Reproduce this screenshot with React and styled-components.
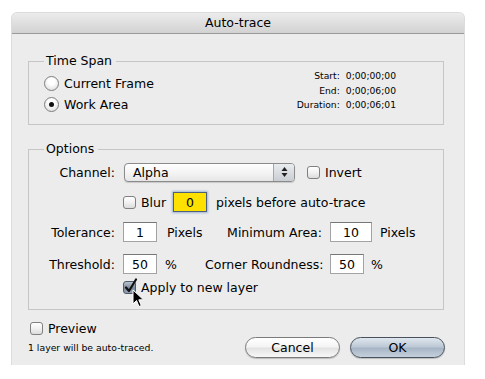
import React from 'react'
import styled, { createGlobalStyle } from 'styled-components'

const Global = createGlobalStyle`
  body {
    margin: 0;
    background: #ffffff;
    font-family: "DejaVu Sans", "Lucida Grande", sans-serif;
    color: #000;
  }
`

const Dialog = styled.div`
  position: relative;
  margin: 13px 0 0 12px;
  width: 452px;
  height: 352px;
  background: #ececec;
  border-radius: 5px 5px 0 0;
  overflow: hidden;
  box-shadow: 0 0 0 1px #dcdcdc;
`

const TitleBar = styled.div`
  height: 20px;
  line-height: 20px;
  text-align: center;
  font-size: 12.5px;
  background: linear-gradient(#ececec, #d2d2d2);
  border-bottom: 1px solid #9a9a9a;
`

const Content = styled.div`
  padding: 0 20px 0 16px;
`

const Group = styled.fieldset`
  margin: ${(p) => p.$top}px 0 0 0;
  padding: 0 0 ${(p) => p.$bottom}px 15px;
  border: 1px solid #c6c6c6;
  min-width: 0;
`

const Legend = styled.legend`
  padding: 0 4px 0 2px;
  font-size: 12.5px;
  line-height: 16px;
`

const SpanRow = styled.div`
  display: flex;
  align-items: flex-start;
`

const RadioList = styled.div`
  display: flex;
  flex-direction: column;
  padding-top: 4px;
`

const Choice = styled.div`
  display: flex;
  align-items: center;
  gap: ${(p) => p.$gap ?? 5}px;
  height: ${(p) => p.$h ?? 21}px;
  font-size: 12.5px;
  white-space: nowrap;
`

const Radio = styled.span`
  width: 13px;
  height: 13px;
  border-radius: 50%;
  border: 1px solid #7f7f7f;
  background: radial-gradient(circle at 50% 35%, #ffffff 30%, #d6d6d6 100%);
  display: flex;
  align-items: center;
  justify-content: center;
  flex: none;
  &::after {
    content: '';
    width: 5px;
    height: 5px;
    border-radius: 50%;
    background: #111;
    display: ${(p) => (p.$on ? 'block' : 'none')};
  }
`

const Timecodes = styled.div`
  margin-left: auto;
  margin-right: 47px;
  display: grid;
  grid-template-columns: auto auto;
  column-gap: 6px;
  font-size: 9.2px;
  line-height: 14.5px;
  & > span:nth-child(odd) {
    text-align: right;
  }
`

const Form = styled.div`
  display: flex;
  flex-direction: column;
  padding-top: 4px;
`

const Row = styled.div`
  display: flex;
  align-items: center;
  height: 22px;
  margin-top: ${(p) => p.$top ?? 0}px;
  font-size: 12.5px;
  white-space: nowrap;
`

const Label = styled.span`
  width: ${(p) => p.$w}px;
  text-align: right;
  margin-right: ${(p) => p.$gap ?? 8}px;
  flex: none;
`

const Unit = styled.span`
  width: ${(p) => (p.$w ? `${p.$w}px` : 'auto')};
  margin-left: ${(p) => p.$left ?? 9}px;
  flex: none;
`

const Select = styled.div`
  width: 171px;
  height: 19px;
  box-sizing: border-box;
  border: 1px solid #8b8b8b;
  border-radius: 4px;
  background: linear-gradient(#ffffff, #f2f2f2 60%, #e6e6e6);
  display: flex;
  align-items: center;
  overflow: hidden;
  box-shadow: 0 1px 1px rgba(0, 0, 0, 0.15);
`

const SelectText = styled.span`
  flex: 1;
  padding-left: 8px;
`

const SelectArrows = styled.span`
  width: 20px;
  height: 100%;
  border-left: 1px solid #a6a6a6;
  background: linear-gradient(#e9ecef, #c9ced4);
  display: flex;
  align-items: center;
  justify-content: center;
`

const Check = styled.span`
  position: relative;
  width: 13px;
  height: 13px;
  box-sizing: border-box;
  border: 1px solid ${(p) => (p.$on ? '#4f5b6a' : '#808080')};
  border-radius: 3px;
  background: ${(p) =>
    p.$on
      ? 'linear-gradient(#b8c2ce, #7d8a9a 55%, #93a0b0)'
      : 'linear-gradient(#ffffff, #f1f1f1 50%, #dcdcdc)'};
  flex: none;
  margin-right: ${(p) => p.$gap ?? 5}px;
  margin-left: ${(p) => p.$left ?? 0}px;
  & svg {
    position: absolute;
    left: 0px;
    top: -4px;
  }
`

const Field = styled.input`
  width: ${(p) => p.$w}px;
  height: 20px;
  box-sizing: border-box;
  margin: 0;
  padding: 0;
  border: 1px solid ${(p) => (p.$focus ? '#4c5f7c' : '#a3a3a3')};
  border-top-color: ${(p) => (p.$focus ? '#4c5f7c' : '#767676')};
  background: ${(p) => (p.$focus ? '#ffe100' : '#ffffff')};
  box-shadow: ${(p) => (p.$focus ? '0 0 2px 1px #9fb5d3' : 'none')};
  text-align: center;
  font-family: inherit;
  font-size: 12.5px;
  color: #000;
  outline: none;
  flex: none;
`

const Footer = styled.div`
  display: flex;
  justify-content: space-between;
  margin-top: 10px;
`

const FooterLeft = styled.div`
  display: flex;
  flex-direction: column;
`

const Note = styled.div`
  margin-top: 6px;
  font-size: 9.3px;
  line-height: 12px;
`

const Buttons = styled.div`
  display: flex;
  gap: 10px;
  margin-top: 17px;
  margin-right: -1px;
`

const Button = styled.button`
  width: 95px;
  height: 21px;
  border-radius: 11px;
  font-family: inherit;
  font-size: 12.5px;
  color: #000;
  padding: 0;
  border: 1px solid ${(p) => (p.$primary ? '#48525e' : '#7a7a7a')};
  background: ${(p) =>
    p.$primary
      ? 'linear-gradient(#dfe6ee 0%, #bcc8d5 48%, #a6b4c4 52%, #c4d0dc 100%)'
      : 'linear-gradient(#ffffff 0%, #f4f4f4 48%, #e2e2e2 52%, #f7f7f7 100%)'};
  box-shadow: 0 1px 1px rgba(0, 0, 0, 0.2);
`

const Cursor = styled.svg`
  position: absolute;
  left: 120px;
  top: 276px;
`

function Tick() {
  return (
    <svg width="14" height="16" viewBox="0 0 14 16">
      <path d="M2 9.5 L5 13 L12 1.5" fill="none" stroke="#111" strokeWidth="2.2" strokeLinecap="round" strokeLinejoin="round" />
    </svg>
  )
}

export default function App() {
  return (
    <>
      <Global />
      <Dialog>
        <TitleBar>Auto-trace</TitleBar>
        <Content>
          <Group $top={19} $bottom={9}>
            <Legend>Time Span</Legend>
            <SpanRow>
              <RadioList>
                <Choice>
                  <Radio />
                  Current Frame
                </Choice>
                <Choice>
                  <Radio $on />
                  Work Area
                </Choice>
              </RadioList>
              <Timecodes>
                <span>Start:</span>
                <span>0;00;00;00</span>
                <span>End:</span>
                <span>0;00;06;00</span>
                <span>Duration:</span>
                <span>0;00;06;01</span>
              </Timecodes>
            </SpanRow>
          </Group>

          <Group $top={16} $bottom={11}>
            <Legend>Options</Legend>
            <Form>
              <Row>
                <Label $w={71} $gap={9}>Channel:</Label>
                <Select>
                  <SelectText>Alpha</SelectText>
                  <SelectArrows>
                    <svg width="7" height="12" viewBox="0 0 7 12">
                      <path d="M3.5 1 L6.5 5 L0.5 5 Z" fill="#222" />
                      <path d="M3.5 11 L6.5 7 L0.5 7 Z" fill="#222" />
                    </svg>
                  </SelectArrows>
                </Select>
                <Check $left={12} />
                Invert
              </Row>
              <Row $top={8}>
                <Label $w={71} />
                <Check />
                <Unit $w={32} $left={0}>Blur</Unit>
                <Field $w={34} $focus readOnly value="0" />
                <Unit $left={9}>pixels before auto-trace</Unit>
              </Row>
              <Row $top={8}>
                <Label $w={71}>Tolerance:</Label>
                <Field $w={34} readOnly value="1" />
                <Unit $w={38} $left={10}>Pixels</Unit>
                <Label $w={117}>Minimum Area:</Label>
                <Field $w={42} readOnly value="10" />
                <Unit $left={8}>Pixels</Unit>
              </Row>
              <Row $top={10}>
                <Label $w={71}>Threshold:</Label>
                <Field $w={34} readOnly value="50" />
                <Unit $w={40} $left={8}>%</Unit>
                <Label $w={117}>Corner Roundness:</Label>
                <Field $w={34} readOnly value="50" />
                <Unit $left={7}>%</Unit>
              </Row>
              <Row $top={1}>
                <Label $w={71} />
                <Check $on>
                  <Tick />
                </Check>
                Apply to new layer
              </Row>
            </Form>
          </Group>

          <Footer>
            <FooterLeft>
              <Choice $h={16}>
                <Check $left={2} $gap={0} />
                Preview
              </Choice>
              <Note>1 layer will be auto-traced.</Note>
            </FooterLeft>
            <Buttons>
              <Button>Cancel</Button>
              <Button $primary>OK</Button>
            </Buttons>
          </Footer>
        </Content>
        <Cursor width="13" height="20" viewBox="0 0 13 20">
          <path d="M1 1 L1 15 L4.5 11.5 L7 17.5 L9.3 16.5 L6.8 10.8 L11.5 10.8 Z" fill="#000" stroke="#fff" strokeWidth="1" strokeLinejoin="round" />
        </Cursor>
      </Dialog>
    </>
  )
}
